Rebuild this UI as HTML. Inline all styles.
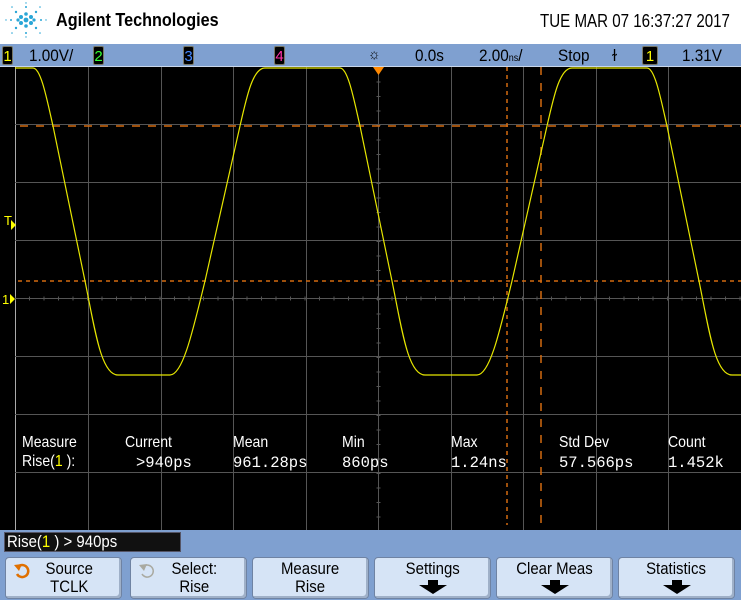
<!DOCTYPE html>
<html><head><style>
*{margin:0;padding:0;box-sizing:border-box}
body{width:741px;height:600px;overflow:hidden;background:#fff;font-family:"Liberation Sans",sans-serif;position:relative}
.abs{position:absolute}
.top{left:0;top:44px;width:741px;height:23px;background:#7fa0d0;border-bottom:1px solid #c8d6ea}
.tb{position:absolute;top:2px;font-size:17px;color:#000;white-space:nowrap;transform:scaleX(.9);transform-origin:left}
.badge{position:absolute;top:2px;width:11px;height:19px;background:#000;border-radius:2px;font-size:15px;text-align:center;line-height:19px;border:1px solid #776}
.scr{left:0;top:67px;width:741px;height:463px;background:#000}
.lbl{position:absolute;color:#fff;font-size:16px;transform:scaleX(.88);transform-origin:left;white-space:nowrap}
.val{position:absolute;color:#fff;font-family:"Liberation Mono",monospace;font-size:15.5px;white-space:nowrap}
.bot{left:0;top:530px;width:741px;height:70px;background:#7fa0d0}
.btn{position:absolute;top:557px;width:117px;height:42px;background:#d6e4f6;border:1px solid #6f83a3;border-radius:4px;box-shadow:inset -2px -2px 0 #9fb0c8;text-align:center;font-size:17px;line-height:18px;padding-top:2px;color:#000}
.btn span{display:inline-block;transform:scaleX(.88)}
.arr{position:absolute;left:50%;margin-left:-15px;top:22px;width:30px;height:15px}
</style></head><body>
<svg class="abs" style="left:5px;top:2px" width="42" height="36" viewBox="0 0 42 36">
<g fill="#2aa6d6">
<circle cx="21" cy="18" r="2.4"/><circle cx="16" cy="15" r="2"/><circle cx="26" cy="15" r="2"/><circle cx="16" cy="21" r="2"/><circle cx="26" cy="21" r="2"/><circle cx="21" cy="12" r="1.8"/><circle cx="21" cy="24" r="1.8"/><circle cx="13" cy="18" r="1.6"/><circle cx="29" cy="18" r="1.6"/>
<circle cx="11" cy="10" r="1.2"/><circle cx="31" cy="10" r="1.2"/><circle cx="11" cy="26" r="1.2"/><circle cx="31" cy="26" r="1.2"/><circle cx="21" cy="5" r="1"/><circle cx="21" cy="31" r="1"/><circle cx="6" cy="18" r="1"/><circle cx="36" cy="18" r="1"/><circle cx="7" cy="5" r=".8"/><circle cx="35" cy="5" r=".8"/><circle cx="7" cy="31" r=".8"/><circle cx="35" cy="31" r=".8"/><circle cx="21" cy="1" r=".7"/><circle cx="21" cy="35" r=".7"/><circle cx="1" cy="18" r=".7"/><circle cx="41" cy="18" r=".7"/>
</g></svg>
<div class="abs" style="left:56px;top:10px;font-size:18px;font-weight:bold;transform:scaleX(.9);transform-origin:left;white-space:nowrap">Agilent Technologies</div>
<div class="abs" style="left:540px;top:11px;font-size:18px;transform:scaleX(.84);transform-origin:left;white-space:nowrap">TUE MAR 07 16:37:27 2017</div>

<div class="abs top">
<div class="badge" style="left:2px;color:#ff0">1</div>
<div class="tb" style="left:29px">1.00V/</div>
<div class="badge" style="left:93px;color:#3f3">2</div>
<div class="badge" style="left:183px;color:#48f">3</div>
<div class="badge" style="left:274px;color:#f3a">4</div>
<div class="tb" style="left:368px;font-size:15px">☼</div>
<div class="tb" style="left:415px">0.0s</div>
<div class="tb" style="left:479px">2.00<span style="font-size:10px">ns</span>/</div>
<div class="tb" style="left:558px">Stop</div>
<div class="tb" style="left:612px">ɫ</div>
<div class="badge" style="left:642px;color:#ff0;width:16px">1</div>
<div class="tb" style="left:682px">1.31V</div>
</div>

<div class="abs scr"></div>
<svg class="abs" style="left:0;top:0" width="741" height="530">
<g stroke="#555" stroke-width="1">
<line x1="15.5" y1="67" x2="15.5" y2="530" stroke="#aaa"/>
<line x1="88.5" y1="67" x2="88.5" y2="530"/><line x1="161.5" y1="67" x2="161.5" y2="530"/><line x1="233.5" y1="67" x2="233.5" y2="530"/><line x1="306.5" y1="67" x2="306.5" y2="530"/><line x1="378.5" y1="67" x2="378.5" y2="530"/><line x1="451.5" y1="67" x2="451.5" y2="530"/><line x1="523.5" y1="67" x2="523.5" y2="530"/><line x1="596.5" y1="67" x2="596.5" y2="530"/><line x1="668.5" y1="67" x2="668.5" y2="530"/>
<line x1="15" y1="124.5" x2="741" y2="124.5"/><line x1="15" y1="182.5" x2="741" y2="182.5"/><line x1="15" y1="240.5" x2="741" y2="240.5"/><line x1="15" y1="298.5" x2="741" y2="298.5"/><line x1="15" y1="356.5" x2="741" y2="356.5"/><line x1="15" y1="414.5" x2="741" y2="414.5"/><line x1="15" y1="472.5" x2="741" y2="472.5"/>
<line x1="15" y1="298.5" x2="741" y2="298.5" stroke="#555" stroke-dasharray="1 13.5" stroke-width="4" stroke-dashoffset="-14"/>
<line x1="378.5" y1="67" x2="378.5" y2="530" stroke="#555" stroke-dasharray="1 13.5" stroke-width="4"/>
</g>
<g stroke="#d36b10" stroke-width="1.5">
<line x1="20" y1="126" x2="741" y2="126" stroke-dasharray="8 8"/>
<line x1="18" y1="281" x2="741" y2="281" stroke-dasharray="4 4"/>
<line x1="507" y1="67" x2="507" y2="525" stroke-dasharray="4 4"/>
<line x1="541" y1="67" x2="541" y2="525" stroke-dasharray="8 8"/>
</g>
<polygon points="373,67 384,67 378.5,75" fill="#f80"/>
<path fill="none" stroke="#e6e600" stroke-width="1.2" d="M15,68 L33,68 C41,68 47,100 53,126 L85,281 C95,330 101,375 118,375 L170,375 C183,375 193,330 205,281 L240,126 C247,95 253,68 265,68 L340,68 C348,68 354,100 360,126 L392,281 C402,330 408,375 425,375 L477,375 C490,375 500,330 512,281 L547,126 C554,95 560,68 572,68 L647,68 C655,68 661,100 667,126 L699,281 C709,330 715,375 732,375 L745,375"/>
<g fill="#ff0">
<text x="4" y="225" font-size="13" font-family="Liberation Sans">T</text><polygon points="11,220 16,225 11,230"/>
<text x="2" y="304" font-size="13" font-family="Liberation Sans">1</text><polygon points="10,294 15,299 10,304"/>
</g>
</svg>

<div class="lbl" style="left:22px;top:434px">Measure</div>
<div class="lbl" style="left:22px;top:453px">Rise(<span style="color:#ff0">1</span> ):</div>
<div class="lbl" style="left:125px;top:434px">Current</div>
<div class="val" style="left:136px;top:454px">&gt;940ps</div>
<div class="lbl" style="left:233px;top:434px">Mean</div>
<div class="val" style="left:233px;top:454px">961.28ps</div>
<div class="lbl" style="left:342px;top:434px">Min</div>
<div class="val" style="left:342px;top:454px">860ps</div>
<div class="lbl" style="left:451px;top:434px">Max</div>
<div class="val" style="left:451px;top:454px">1.24ns</div>
<div class="lbl" style="left:559px;top:434px">Std Dev</div>
<div class="val" style="left:559px;top:454px">57.566ps</div>
<div class="lbl" style="left:668px;top:434px">Count</div>
<div class="val" style="left:668px;top:454px">1.452k</div>

<div class="abs bot"></div>
<div class="abs" style="left:4px;top:532px;width:177px;height:20px;background:#111;border:1px solid #556;color:#fff;font-size:17px;line-height:18px;padding-left:2px;white-space:nowrap"><span style="display:inline-block;transform:scaleX(.88);transform-origin:left">Rise(<span style="color:#ff0">1</span> ) &gt; 940ps</span></div>

<div class="btn" style="left:5px"><span>&nbsp;&nbsp;&nbsp;Source<br>&nbsp;&nbsp;&nbsp;TCLK</span>
<svg class="abs" style="left:7px;top:4px" width="20" height="18"><path d="M6,4 A6,6 0 1 1 4,12" fill="none" stroke="#e07000" stroke-width="2.5"/><polygon points="1,3 9,2 6,9" fill="#e07000"/></svg></div>
<div class="btn" style="left:130px"><span>&nbsp;&nbsp;&nbsp;Select:<br>&nbsp;&nbsp;&nbsp;Rise</span>
<svg class="abs" style="left:7px;top:4px" width="20" height="18"><path d="M6,4 A6,6 0 1 1 4,12" fill="none" stroke="#a9a9a0" stroke-width="1.5"/><polygon points="1,3 9,2 6,9" fill="#a9a9a0"/></svg></div>
<div class="btn" style="left:252px"><span>Measure<br>Rise</span></div>
<div class="btn" style="left:374px"><span>Settings</span><svg class="arr" viewBox="0 0 30 15"><polygon points="10,0 20,0 20,5 29,5 15,14 1,5 10,5" fill="#000"/></svg></div>
<div class="btn" style="left:496px"><span>Clear Meas</span><svg class="arr" viewBox="0 0 30 15"><polygon points="10,0 20,0 20,5 29,5 15,14 1,5 10,5" fill="#000"/></svg></div>
<div class="btn" style="left:618px"><span>Statistics</span><svg class="arr" viewBox="0 0 30 15"><polygon points="10,0 20,0 20,5 29,5 15,14 1,5 10,5" fill="#000"/></svg></div>
</body></html>
